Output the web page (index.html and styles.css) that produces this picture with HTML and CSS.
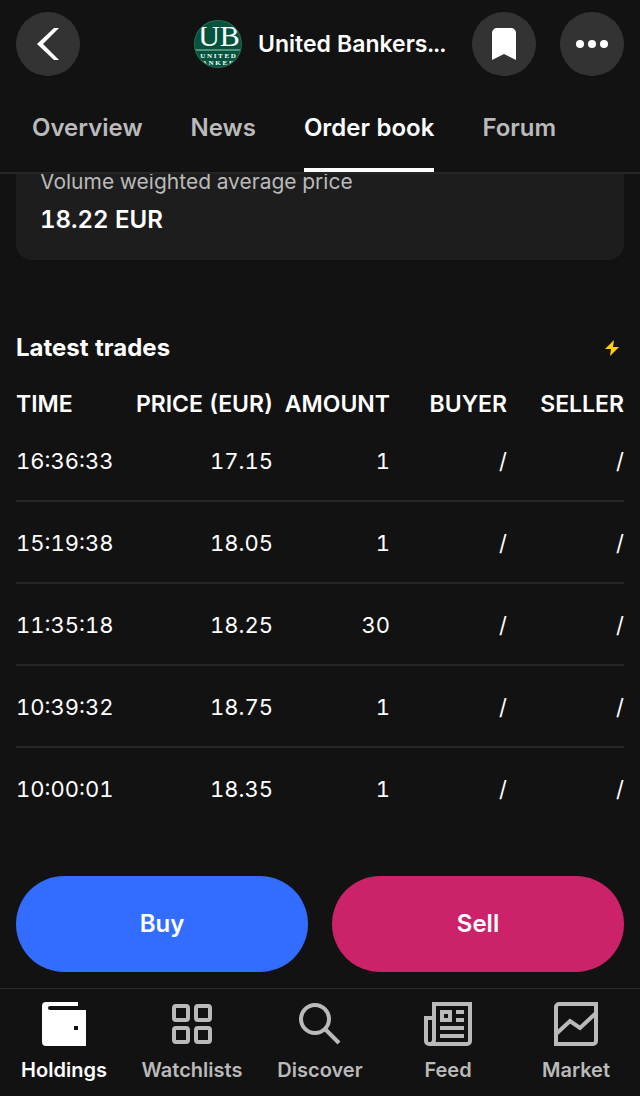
FILE: index.html
```html
<!DOCTYPE html>
<html lang="en">
<head>
    <meta charset="UTF-8">
    <meta name="viewport" content="width=device-width, initial-scale=1.0">
    <title>United Bankers - Order book</title>
    <link rel="stylesheet" href="styles.css">
</head>
<body>
    <header class="header">
        <div class="topbar">
            <button class="round-button" type="button" aria-label="Back">
                <svg width="32" height="32" viewBox="0 0 32 32">
                    <path d="M22 0h5L11 16l16 16h-5L5 16z" fill="#fff"/>
                </svg>
            </button>
            <div class="company">
                <svg class="logo" viewBox="0 0 48 48" role="img" aria-label="United Bankers">
                    <defs>
                        <clipPath id="logoClip"><circle cx="24" cy="24" r="23"/></clipPath>
                    </defs>
                    <circle cx="24" cy="24" r="24" fill="#2b6a57"/>
                    <g clip-path="url(#logoClip)">
                        <rect width="48" height="48" fill="#04543d"/>
                        <text class="logo-letters" x="25" y="26">UB</text>
                        <path d="M1 30h46" stroke="#a9c8bd"/>
                        <text class="logo-name" x="24" y="38">U N I T E D</text>
                        <text class="logo-name" x="24" y="45">A N K E R</text>
                    </g>
                </svg>
                <h1>United Bankers...</h1>
            </div>
            <div class="actions">
                <button class="round-button" type="button" aria-label="Bookmark">
                    <svg width="32" height="32" viewBox="0 0 32 32">
                        <path d="M4 5a5 5 0 0 1 5-5h14a5 5 0 0 1 5 5v27l-12-6-12 6z" fill="#fff"/>
                    </svg>
                </button>
                <button class="round-button" type="button" aria-label="More">
                    <svg width="32" height="32" viewBox="0 0 32 32" fill="#fff">
                        <circle cx="4" cy="16" r="4"/>
                        <circle cx="16" cy="16" r="4"/>
                        <circle cx="28" cy="16" r="4"/>
                    </svg>
                </button>
            </div>
        </div>
        <nav class="tabs" aria-label="Instrument">
            <a href="#">Overview</a>
            <a href="#">News</a>
            <a href="#" class="active">Order book</a>
            <a href="#">Forum</a>
        </nav>
    </header>

    <main class="content">
        <div class="card">
            <p class="card-label">Volume weighted average price</p>
            <p class="card-value">18.22 EUR</p>
        </div>

        <section>
            <div class="section-title">
                <h2>Latest trades</h2>
                <svg width="24" height="24" viewBox="0 0 24 24">
                    <path d="M14 4L5 13h6l-1 7 9-9h-6z" fill="#ffcf0d"/>
                </svg>
            </div>
            <table class="trades">
                <thead>
                    <tr>
                        <th>Time</th>
                        <th class="col-price">Price (EUR)</th>
                        <th>Amount</th>
                        <th>Buyer</th>
                        <th>Seller</th>
                    </tr>
                </thead>
                <tbody>
                    <tr><td>16:36:33</td><td>17.15</td><td>1</td><td>/</td><td>/</td></tr>
                    <tr><td>15:19:38</td><td>18.05</td><td>1</td><td>/</td><td>/</td></tr>
                    <tr><td>11:35:18</td><td>18.25</td><td>30</td><td>/</td><td>/</td></tr>
                    <tr><td>10:39:32</td><td>18.75</td><td>1</td><td>/</td><td>/</td></tr>
                    <tr><td>10:00:01</td><td>18.35</td><td>1</td><td>/</td><td>/</td></tr>
                </tbody>
            </table>
        </section>
    </main>

    <footer class="footer">
        <div class="order-buttons">
            <button class="buy" type="button">Buy</button>
            <button class="sell" type="button">Sell</button>
        </div>
        <nav class="bottom-nav" aria-label="Main">
            <a href="#" class="active">
                <svg width="48" height="48" viewBox="0 0 48 48">
                    <path d="M6 2h32v4H10a2 2 0 0 0 0 4h36v36H6a4 4 0 0 1-4-4V6a4 4 0 0 1 4-4zM34 26v4h4v-4z" fill="currentColor" fill-rule="evenodd"/>
                </svg>
                Holdings
            </a>
            <a href="#">
                <svg width="48" height="48" viewBox="0 0 48 48" fill="none" stroke="currentColor" stroke-width="4">
                    <rect x="6" y="6" width="14" height="14" rx="2"/>
                    <rect x="28" y="6" width="14" height="14" rx="2"/>
                    <rect x="6" y="28" width="14" height="14" rx="2"/>
                    <rect x="28" y="28" width="14" height="14" rx="2"/>
                </svg>
                Watchlists
            </a>
            <a href="#">
                <svg width="48" height="48" viewBox="0 0 48 48" fill="none" stroke="currentColor" stroke-width="4">
                    <circle cx="19" cy="19" r="14"/>
                    <path d="M29 29L43 43"/>
                </svg>
                Discover
            </a>
            <a href="#">
                <svg width="48" height="48" viewBox="0 0 48 48" fill="none" stroke="currentColor" stroke-width="4">
                    <path d="M10 40V4h36v37a3 3 0 0 1-3 3H5a3 3 0 0 1-3-3V18h8"/>
                    <path d="M10 38v2a4 4 0 0 1-4 4"/>
                    <path d="M18 12h8v8h-8z"/>
                    <path d="M32 12h8M32 20h8M16 28h24M16 36h24"/>
                </svg>
                Feed
            </a>
            <a href="#">
                <svg width="48" height="48" viewBox="0 0 48 48" fill="none" stroke="currentColor" stroke-width="4">
                    <path d="M4 44V7a3 3 0 0 1 3-3h37v37a3 3 0 0 1-3 3z"/>
                    <path d="M4 34l14-13 10 7 16-15"/>
                </svg>
                Market
            </a>
        </nav>
    </footer>
</body>
</html>
```
FILE: styles.css
```css
* {
    box-sizing: border-box;
}

body {
    font-family: Inter, "Liberation Sans", sans-serif;
    font-size: 24px;
    font-variant-numeric: tabular-nums;
    line-height: 32px;
    margin: 0;
    min-height: 100vh;
    display: flex;
    flex-direction: column;
    background-color: #121212;
    color: white;
}

h1, h2, p {
    margin: 0;
    font-size: 24px;
}

h1 {
    font-size: 23px;
    font-weight: 600;
}

a {
    color: #bababa;
    text-decoration: none;
}

a.active {
    color: white;
}

button {
    border: none;
    padding: 0;
    color: white;
    font: inherit;
    cursor: pointer;
}

svg {
    display: block;
}

.header {
    position: sticky;
    top: 0;
    z-index: 1;
    background-color: #121212;
    border-bottom: 2px solid #262626;
}

.topbar {
    display: grid;
    grid-template-columns: 1fr auto 1fr;
    align-items: center;
    padding: 12px 16px;
}

.round-button {
    display: flex;
    align-items: center;
    justify-content: center;
    width: 64px;
    height: 64px;
    border-radius: 50%;
    background-color: #333;
}

.company {
    display: flex;
    align-items: center;
    gap: 16px;
}

.logo {
    width: 48px;
    height: 48px;
}

.logo-letters {
    font-family: "Liberation Serif", serif;
    font-size: 30px;
    text-anchor: middle;
    fill: white;
}

.logo-name {
    font-family: "Liberation Serif", serif;
    font-size: 7px;
    font-weight: bold;
    text-anchor: middle;
    fill: white;
}

.actions {
    display: flex;
    justify-content: flex-end;
    gap: 24px;
}

.tabs {
    display: flex;
    gap: 48px;
    padding: 0 32px;
    font-weight: 600;
}

.tabs a {
    line-height: 80px;
    border-bottom: 4px solid transparent;
}

.tabs a.active {
    border-bottom-color: white;
}

.content {
    flex: 1;
    padding: 0 16px 48px;
}

/* scrolled partly under the header */
.card {
    margin-top: -32px;
    padding: 24px;
    border-radius: 16px;
    background-color: #1d1d1d;
}

.card-label {
    margin-bottom: 6px;
    font-size: 21px;
    color: #bababa;
}

.card-value {
    font-weight: 600;
}

.section-title {
    display: flex;
    align-items: center;
    justify-content: space-between;
    margin-top: 72px;
}

.section-title h2 {
    font-weight: 700;
}

.trades {
    width: 100%;
    table-layout: fixed;
    border-collapse: separate;
    border-spacing: 0;
}

.trades th {
    padding: 24px 0 0;
    font-size: 23px;
    font-weight: 600;
    text-align: right;
    text-transform: uppercase;
    white-space: nowrap;
}

.trades td {
    padding: 25px 0 23px;
    border-bottom: 2px solid #262626;
    font-size: 22px;
    text-align: right;
}

.trades th:first-child,
.trades td:first-child {
    text-align: left;
}

.trades tr:last-child td {
    border-bottom: none;
}

.trades .col-price {
    width: 140px;
}

.footer {
    position: sticky;
    bottom: 0;
    background-color: #121212;
}

.order-buttons {
    display: grid;
    grid-template-columns: 1fr 1fr;
    gap: 24px;
    padding: 0 16px 16px;
}

.order-buttons button {
    height: 96px;
    border-radius: 48px;
    font-weight: 600;
}

.buy {
    background-color: #336dff;
}

.sell {
    background-color: #cc2269;
}

.bottom-nav {
    display: grid;
    grid-template-columns: repeat(5, 1fr);
    padding: 11px 0 10px;
    border-top: 1px solid #2b2b2b;
    font-size: 20px;
    font-weight: 600;
}

.bottom-nav a {
    display: flex;
    flex-direction: column;
    align-items: center;
    gap: 6px;
}
```
